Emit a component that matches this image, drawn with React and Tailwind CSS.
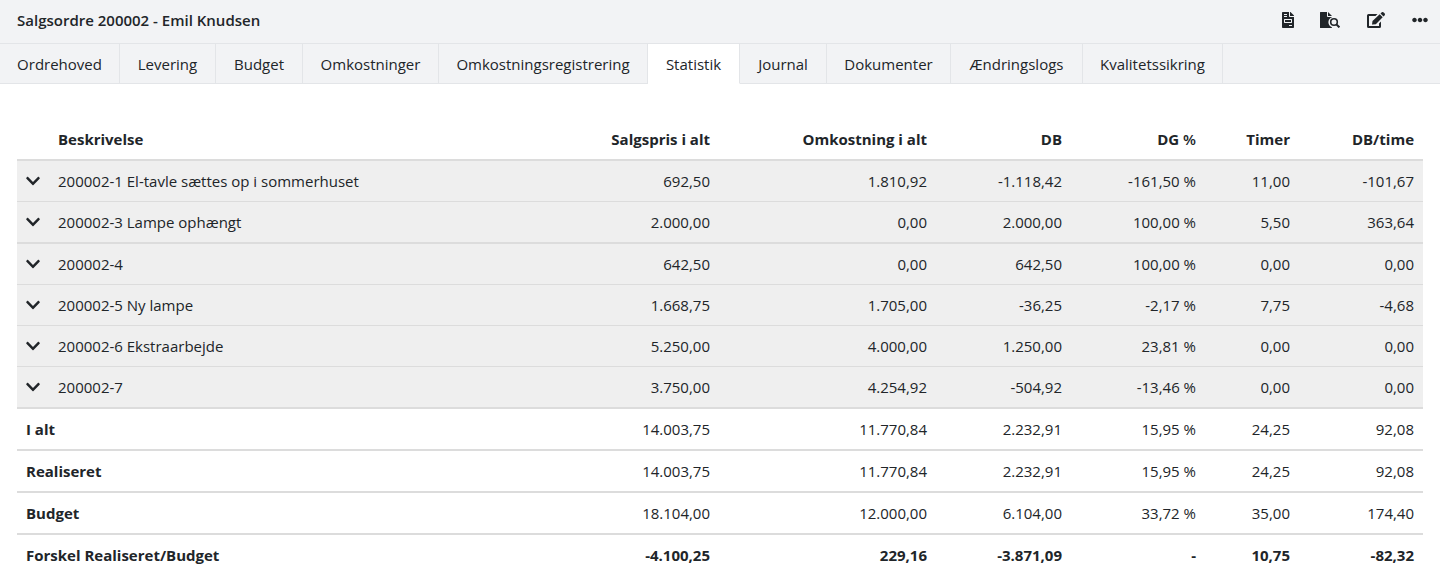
import React, { useState } from 'react';
import { FaChevronDown, FaEllipsisH, FaFileInvoice } from 'react-icons/fa';

const tabs = [
  { label: 'Ordrehoved', width: 'w-[120px]' },
  { label: 'Levering', width: 'w-[96px]' },
  { label: 'Budget', width: 'w-[87px]' },
  { label: 'Omkostninger', width: 'w-[136px]' },
  { label: 'Omkostningsregistrering', width: 'w-[209px]' },
  { label: 'Statistik', width: 'w-[92px]' },
  { label: 'Journal', width: 'w-[87px]' },
  { label: 'Dokumenter', width: 'w-[124px]' },
  { label: 'Ændringslogs', width: 'w-[132px]' },
  { label: 'Kvalitetssikring', width: 'w-[140px]' },
];

const lines = [
  { name: '200002-1 El-tavle sættes op i sommerhuset', values: ['692,50', '1.810,92', '-1.118,42', '-161,50 %', '11,00', '-101,67'], border: 'border-t-2' },
  { name: '200002-3 Lampe ophængt', values: ['2.000,00', '0,00', '2.000,00', '100,00 %', '5,50', '363,64'], border: 'border-t' },
  { name: '200002-4', values: ['642,50', '0,00', '642,50', '100,00 %', '0,00', '0,00'], border: 'border-t-2' },
  { name: '200002-5 Ny lampe', values: ['1.668,75', '1.705,00', '-36,25', '-2,17 %', '7,75', '-4,68'], border: 'border-t' },
  { name: '200002-6 Ekstraarbejde', values: ['5.250,00', '4.000,00', '1.250,00', '23,81 %', '0,00', '0,00'], border: 'border-t' },
  { name: '200002-7', values: ['3.750,00', '4.254,92', '-504,92', '-13,46 %', '0,00', '0,00'], border: 'border-t' },
];

const totals = [
  { name: 'I alt', values: ['14.003,75', '11.770,84', '2.232,91', '15,95 %', '24,25', '92,08'] },
  { name: 'Realiseret', values: ['14.003,75', '11.770,84', '2.232,91', '15,95 %', '24,25', '92,08'] },
  { name: 'Budget', values: ['18.104,00', '12.000,00', '6.104,00', '33,72 %', '35,00', '174,40'] },
  { name: 'Forskel Realiseret/Budget', values: ['-4.100,25', '229,16', '-3.871,09', '-', '10,75', '-82,32'], bold: true },
];

const FileSearchIcon = () => (
  <svg viewBox="0 0 20 16" className="h-4 w-5" fill="currentColor" aria-hidden="true">
    <path d="M.5 0H7v4.200c0 .5.3.8.8.8H12v.3a5.200 5.200 0 0 0-2 8.700l2 1.500v.5H.5a.5.5 0 0 1-.5-.5V.5A.5.5 0 0 1 .5 0z" />
    <path d="M8 0l4 4H8z" />
    <circle cx="14" cy="10" r="3.300" fill="none" stroke="currentColor" strokeWidth="1.600" />
    <path d="M16.400 12.400l3 3" fill="none" stroke="currentColor" strokeWidth="2" />
  </svg>
);

const EditIcon = () => (
  <svg viewBox="0 0 18 16" className="h-4 w-[18px]" fill="currentColor" aria-hidden="true">
    <path d="M10.500 2H1.500A1.500 1.500 0 0 0 0 3.500v11A1.500 1.500 0 0 0 1.500 16h11a1.500 1.500 0 0 0 1.500-1.500V9.500l-2 2V14H2V4h6.500z" />
    <path d="M12.700 2.300l3 3-6.900 6.900-3.100.4a.5.5 0 0 1-.6-.6l.4-2.900z" />
    <path d="M13.500 1.500l1-1a1.600 1.600 0 0 1 2.200 0l.8.8a1.600 1.600 0 0 1 0 2.200l-1 1z" />
  </svg>
);

const App = () => {
  const [activeTab, setActiveTab] = useState('Statistik');

  return (
    <div className="bg-white font-['Open_Sans','Noto_Sans',sans-serif] text-[15px] leading-6 text-[#212529]">
      <header className="flex h-11 items-center justify-between border-b border-[#e3e5e8] bg-[#f2f3f5] pr-3 pb-[3px] pl-[17px]">
        <h1 className="leading-5 font-semibold">Salgsordre 200002 - Emil Knudsen</h1>
        <div className="flex items-center">
          <button type="button" aria-label="Faktura" className="mr-6 flex">
            <FaFileInvoice className="h-4 w-4" />
          </button>
          <button type="button" aria-label="Søg i dokumenter" className="mr-[27px] flex">
            <FileSearchIcon />
          </button>
          <button type="button" aria-label="Rediger" className="mr-[27px] flex">
            <EditIcon />
          </button>
          <button type="button" aria-label="Flere" className="flex">
            <FaEllipsisH className="h-4 w-4" />
          </button>
        </div>
      </header>

      <nav className="flex h-10 bg-[#f2f3f5]">
        {tabs.map((tab) => (
          <button
            key={tab.label}
            type="button"
            onClick={() => setActiveTab(tab.label)}
            className={`${tab.width} shrink-0 border-r border-b border-[#e3e5e8] text-center whitespace-nowrap ${
              activeTab === tab.label ? 'border-b-white bg-white' : ''
            }`}
          >
            {tab.label}
          </button>
        ))}
        <div className="grow border-b border-[#e3e5e8]" />
      </nav>

      <main className="px-[17px] pt-[35px]">
        <table className="w-full table-fixed border-separate border-spacing-0">
          <thead>
            <tr className="h-10 text-right [&>th]:px-[9px] [&>th]:font-bold">
              <th className="w-8" aria-label="Fold ud" />
              <th className="text-left">Beskrivelse</th>
              <th className="w-[180px]">Salgspris i alt</th>
              <th className="w-[217px]">Omkostning i alt</th>
              <th className="w-[135px]">DB</th>
              <th className="w-[134px]">DG <span className="font-semibold">%</span></th>
              <th className="w-[94px]">Timer</th>
              <th className="w-[124px]">DB/time</th>
            </tr>
          </thead>
          <tbody>
            {lines.map((line) => (
              <tr key={line.name} className="bg-[#efefef]">
                <td className={`${line.border} border-[#dcdcdc] pl-2`}>
                  <button type="button" aria-label={`Vis ${line.name}`} className="flex h-10 items-center">
                    <FaChevronDown className="h-4 w-4" />
                  </button>
                </td>
                <td className={`${line.border} border-[#dcdcdc] px-[9px] whitespace-nowrap`}>{line.name}</td>
                {line.values.map((value, i) => (
                  <td key={i} className={`${line.border} border-[#dcdcdc] px-[9px] text-right`}>{value}</td>
                ))}
              </tr>
            ))}
          </tbody>
          <tfoot>
            {totals.map((total) => (
              <tr key={total.name} className={total.bold ? 'font-bold' : ''}>
                <th colSpan={2} scope="row" className="h-[42px] border-t-2 border-[#dcdcdc] px-[9px] text-left font-bold">
                  {total.name}
                </th>
                {total.values.map((value, i) => (
                  <td key={i} className="border-t-2 border-[#dcdcdc] px-[9px] text-right">{value}</td>
                ))}
              </tr>
            ))}
          </tfoot>
        </table>
      </main>
    </div>
  );
};

export default App;
